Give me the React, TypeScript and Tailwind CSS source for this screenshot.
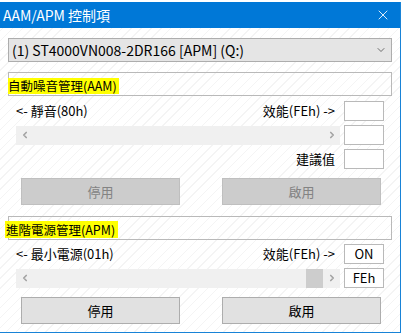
import { ChevronDown, ChevronLeft, ChevronRight, X } from "lucide-react"

const font = "font-['Noto_Sans_CJK_TC','Noto_Sans',sans-serif]"

function ValueBox({ value }: { value?: string }) {
  return (
    <div className="w-[40px] h-[20px] bg-white border border-[#b9b9b9] flex items-center justify-center text-[13px] text-black">
      {value}
    </div>
  )
}

function ScrollBar({ thumb }: { thumb?: boolean }) {
  return (
    <div className="w-[324px] h-[19px] bg-[#f0f0f0] flex items-center justify-between">
      <div className="w-[17px] flex justify-center">
        <ChevronLeft className="w-[10px] h-[10px] text-[#a3a3a3]" strokeWidth={4} />
      </div>
      <div className="flex-1 h-full flex justify-end">
        {thumb && <div className="w-[17px] h-full bg-[#cdcdcd]" />}
      </div>
      <div className="w-[17px] flex justify-center">
        <ChevronRight className="w-[10px] h-[10px] text-[#a3a3a3]" strokeWidth={4} />
      </div>
    </div>
  )
}

function Btn({ label, disabled }: { label: string; disabled?: boolean }) {
  return (
    <div
      className={
        disabled
          ? "w-[159px] h-[27px] bg-[#cccccc] border border-[#bfbfbf] text-[#838383] flex items-center justify-center text-[13px]"
          : "w-[159px] h-[27px] bg-[#e1e1e1] border border-[#adadad] text-black flex items-center justify-center text-[13px]"
      }
    >
      {label}
    </div>
  )
}

export default function App() {
  return (
    <div className={`w-[403px] h-[334px] bg-white overflow-hidden ${font}`}>
      <div className="h-[2px]" />
      <div className="w-[401px] h-[331px] border-r border-b border-[#1883d7] flex flex-col bg-[repeating-linear-gradient(135deg,#ffffff_0px,#ffffff_6px,#f4f4f4_6px,#f4f4f4_7px)]">
        {/* Title bar */}
        <div className="h-[26px] bg-[#0078d7] flex items-center justify-between pl-[3px] pr-[9px]">
          <span className="text-white text-[14px]">AAM/APM 控制項</span>
          <X className="w-[16px] h-[16px] text-white" strokeWidth={1.3} />
        </div>

        <div className="pl-[8px] pr-[8px]">
          {/* Drive combo */}
          <div className="mt-[10px] w-[384px] h-[24px] bg-[#e5e5e5] border border-[#adadad] flex items-center justify-between pl-[3px] pr-[4px] text-[14px] text-black">
            <span>(1) ST4000VN008-2DR166 [APM] (Q:)</span>
            <ChevronDown className="w-[12px] h-[12px] text-[#444444]" strokeWidth={1.5} />
          </div>

          {/* AAM */}
          <div className="mt-[10px] w-[384px] h-[24px] border border-[#b9b9b9] flex items-center">
            <span className="-ml-px mt-[3px] bg-[#ffff00] text-[12.5px] leading-[16px] text-black pr-[2px]">自動噪音管理(AAM)</span>
          </div>

          <div className="pl-[8px] mt-[5px] flex flex-col gap-[4px] text-[13px] text-black">
            <div className="flex items-center gap-[4px]">
              <div className="w-[324px] flex justify-between pr-[5px]">
                <span>&lt;- 靜音(80h)</span>
                <span>效能(FEh) -&gt;</span>
              </div>
              <ValueBox />
            </div>
            <div className="flex items-center gap-[4px]">
              <ScrollBar />
              <ValueBox />
            </div>
            <div className="flex items-center gap-[4px]">
              <div className="w-[324px] flex justify-end pr-[5px]">
                <span>建議值</span>
              </div>
              <ValueBox />
            </div>
          </div>

          <div className="mt-[9px] pl-[13px] flex gap-[42px]">
            <Btn label="停用" disabled />
            <Btn label="啟用" disabled />
          </div>

          {/* APM */}
          <div className="mt-[11px] w-[384px] h-[24px] border border-[#b9b9b9] flex items-center">
            <span className="-ml-[4px] mt-[3px] bg-[#ffff00] text-[12.5px] leading-[17px] text-black pl-px pr-[3px]">進階電源管理(APM)</span>
          </div>

          <div className="pl-[8px] mt-[4px] flex flex-col gap-[4px] text-[13px] text-black">
            <div className="flex items-center gap-[4px]">
              <div className="w-[324px] flex justify-between pr-[5px]">
                <span>&lt;- 最小電源(01h)</span>
                <span>效能(FEh) -&gt;</span>
              </div>
              <ValueBox value="ON" />
            </div>
            <div className="flex items-center gap-[4px]">
              <ScrollBar thumb />
              <ValueBox value="FEh" />
            </div>
          </div>

          <div className="mt-[9px] pl-[13px] flex gap-[42px]">
            <Btn label="停用" />
            <Btn label="啟用" />
          </div>
        </div>
      </div>
    </div>
  )
}
